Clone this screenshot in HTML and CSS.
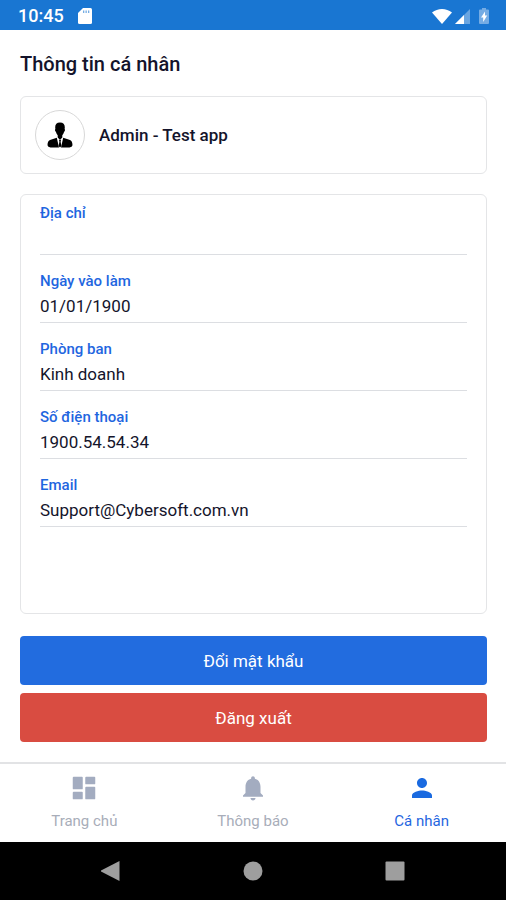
FILE: index.html
```html
<!DOCTYPE html>
<html lang="vi">
<head>
<meta charset="utf-8">
<meta name="viewport" content="width=device-width, initial-scale=1">
<title>Thông tin cá nhân</title>
<link rel="stylesheet" href="styles.css">
</head>
<body>
<div class="status-bar">
  <span class="status-time">10:45</span>
  <svg class="status-card" viewBox="0 0 14 16" width="14" height="16" aria-hidden="true"><path fill="#fff" d="M5 0h7.500Q14 0 14 1.500v13Q14 16 12.500 16h-11Q0 16 0 14.500V5z"/><path fill="#1976d2" fill-opacity=".6" d="M5 2.500h1.300v2.500H5zM7.500 2.500h1.300v2.500H7.500zM10 2.500h1.300v2.500H10z"/></svg>
  <div class="status-icons">
    <svg viewBox="0 0 20 15" width="20" height="15" aria-hidden="true"><path fill="#fff" d="M10 15L0 3.500Q4.500 0 10 0t10 3.500z"/></svg>
    <svg viewBox="0 0 15 15" width="15" height="15" aria-hidden="true"><path fill="#fff" fill-opacity=".35" d="M15 0v15H0z"/><path fill="#fff" d="M9 6v9H0z"/></svg>
    <svg class="status-battery" viewBox="0 0 10 16" width="10" height="16" aria-hidden="true"><path fill="#fff" fill-opacity=".4" d="M3 0h4v1.500h2q1 0 1 1V15q0 1-1 1H1q-1 0-1-1V2.500q0-1 1-1h2z"/><path fill="#fff" d="M6 3.500v4h2.200L4.200 14V9.500H2z"/></svg>
  </div>
</div>

<main class="content">
  <h1 class="title">Thông tin cá nhân</h1>

  <section class="card profile">
    <div class="avatar">
      <svg viewBox="0 0 26 26" width="26" height="26" aria-hidden="true">
        <path d="M13 .5c3.300 0 4.800 1.800 4.800 4.800 0 .8-.1 1.300-.2 1.800.7.200.5 2.300-.5 2.700-.4 1.600-1 2.700-1.800 3.400v2.300L13 18l-2.300-2.500v-2.300c-.8-.7-1.400-1.800-1.800-3.400-1-.4-1.200-2.500-.5-2.700-.1-.5-.2-1-.2-1.800C8.200 2.300 9.700.5 13 .5z"/>
        <path d="M9.800 15.800L12 25.500H3.500Q.8 25 .5 23.300c.1-3 .8-4.600 2.500-5.300zM16.200 15.800L14 25.500h8.500q2.700-.5 3-2.200c-.1-3-.8-4.600-2.500-5.300z"/>
        <path d="M12 18h2l-.4 1.700L14.400 24 13 25.500 11.600 24l.8-4.300z"/>
      </svg>
    </div>
    <span class="profile-name">Admin - Test app</span>
  </section>

  <form class="card details">
    <div class="field">
      <label for="address">Địa chỉ</label>
      <input id="address" type="text" value="" readonly>
    </div>
    <div class="field">
      <label for="start">Ngày vào làm</label>
      <input id="start" type="text" value="01/01/1900" readonly>
    </div>
    <div class="field">
      <label for="dept">Phòng ban</label>
      <input id="dept" type="text" value="Kinh doanh" readonly>
    </div>
    <div class="field">
      <label for="phone">Số điện thoại</label>
      <input id="phone" type="tel" value="1900.54.54.34" readonly>
    </div>
    <div class="field">
      <label for="email">Email</label>
      <input id="email" type="email" value="Support@Cybersoft.com.vn" readonly>
    </div>
  </form>

  <div class="actions">
    <button class="btn btn-primary" type="button">Đổi mật khẩu</button>
    <button class="btn btn-danger" type="button">Đăng xuất</button>
  </div>
</main>

<nav class="tabs">
  <a class="tab" href="#home">
    <svg viewBox="0 0 24 24" width="30" height="30" aria-hidden="true"><rect x="3" y="3" width="8" height="10" rx=".7"/><rect x="3" y="15" width="8" height="6" rx=".7"/><rect x="13" y="3" width="8" height="6" rx=".7"/><rect x="13" y="11" width="8" height="10" rx=".7"/></svg>
    <span>Trang chủ</span>
  </a>
  <a class="tab" href="#notifications">
    <svg viewBox="0 0 24 24" width="30" height="30" aria-hidden="true"><path d="M12 22c1.100 0 2-.9 2-2h-4c0 1.100.9 2 2 2zm6-6v-5c0-3.070-1.640-5.640-4.500-6.320V4c0-.83-.67-1.500-1.500-1.500s-1.500.67-1.500 1.500v.68C7.630 5.360 6 7.920 6 11v5l-2 2v1h16v-1z"/></svg>
    <span>Thông báo</span>
  </a>
  <a class="tab tab-active" href="#profile" aria-current="page">
    <svg viewBox="0 0 24 24" width="30" height="30" aria-hidden="true"><path d="M12 12c2.210 0 4-1.790 4-4s-1.790-4-4-4-4 1.790-4 4 1.790 4 4 4zm0 2c-2.670 0-8 1.340-8 4v2h16v-2c0-2.660-5.330-4-8-4z"/></svg>
    <span>Cá nhân</span>
  </a>
</nav>

<div class="system-bar">
  <button type="button" aria-label="Quay lại"><svg viewBox="0 0 20 20" width="20" height="20" aria-hidden="true"><path d="M18.500 0v20L0 10.500v-1z"/></svg></button>
  <button type="button" aria-label="Màn hình chính"><svg viewBox="0 0 20 20" width="20" height="20" aria-hidden="true"><circle cx="10" cy="10" r="9.500"/></svg></button>
  <button type="button" aria-label="Ứng dụng gần đây"><svg viewBox="0 0 20 20" width="20" height="20" aria-hidden="true"><rect x=".5" y=".5" width="19" height="19" rx="1"/></svg></button>
</div>
</body>
</html>
```
FILE: styles.css
```css
* {
  box-sizing: border-box;
}

body {
  margin: 0;
  min-height: 100vh;
  display: flex;
  flex-direction: column;
  background: #fff;
  color: #14142b;
  font-family: Roboto, "Liberation Sans", sans-serif;
}

svg {
  display: block;
}

.status-bar {
  height: 30px;
  padding: 2px 17px 0 18px;
  display: flex;
  align-items: center;
  gap: 14px;
  background: #1976d2;
  color: #fff;
}

.status-time {
  font-size: 18px;
  line-height: 20px;
  font-weight: 500;
}

.status-icons {
  margin-left: auto;
  display: flex;
  align-items: center;
  gap: 3px;
}

.status-battery {
  margin-left: 6px;
}

.content {
  flex: 1;
  display: flex;
  flex-direction: column;
  padding: 22px 19px 20px 20px;
}

.title {
  margin: 0 0 20px;
  font-size: 20px;
  line-height: 24px;
  font-weight: 500;
}

.card {
  border: 1px solid #e4e5e7;
  border-radius: 6px;
}

.profile {
  display: flex;
  align-items: center;
  gap: 14px;
  margin-bottom: 20px;
  padding: 13px 14px;
}

.avatar {
  width: 50px;
  height: 50px;
  display: flex;
  align-items: center;
  justify-content: center;
  border: 1px solid #d8d8d8;
  border-radius: 50%;
}

.profile-name {
  font-size: 17px;
  line-height: 24px;
  font-weight: 500;
}

.details {
  flex: 1;
  display: flex;
  flex-direction: column;
  gap: 16px;
  margin-bottom: 22px;
  padding: 8px 19px;
}

.field {
  display: flex;
  flex-direction: column;
  border-bottom: 1px solid #dcdee2;
}

.field label {
  color: #1f66df;
  font-size: 15px;
  line-height: 20px;
  font-weight: 500;
}

.field input {
  width: 100%;
  height: 31px;
  padding: 0 0 1px;
  border: 0;
  outline: 0;
  background: none;
  color: inherit;
  font-family: inherit;
  font-size: 17px;
}

.actions {
  display: flex;
  flex-direction: column;
  gap: 8px;
}

.btn {
  height: 49px;
  padding: 0;
  border: 0;
  border-radius: 4px;
  color: #fff;
  font-family: inherit;
  font-size: 17px;
}

.btn-primary {
  background: #226cdf;
}

.btn-danger {
  background: #d94c41;
}

.tabs {
  display: grid;
  grid-template-columns: repeat(3, 1fr);
  height: 80px;
  padding-top: 9px;
  border-top: 2px solid #e2e3e5;
}

.tab {
  display: flex;
  flex-direction: column;
  align-items: center;
  gap: 8px;
  color: #a8adb9;
  fill: #a3acc0;
  font-size: 15px;
  line-height: 20px;
  text-decoration: none;
}

.tab-active {
  color: #1f66df;
  fill: #1a6ae0;
}

.system-bar {
  display: grid;
  grid-template-columns: repeat(3, 1fr);
  height: 58px;
  padding: 0 8%;
  background: #000;
}

.system-bar button {
  display: flex;
  align-items: center;
  justify-content: center;
  padding: 0;
  border: 0;
  background: none;
  fill: #9e9e9e;
}
```
